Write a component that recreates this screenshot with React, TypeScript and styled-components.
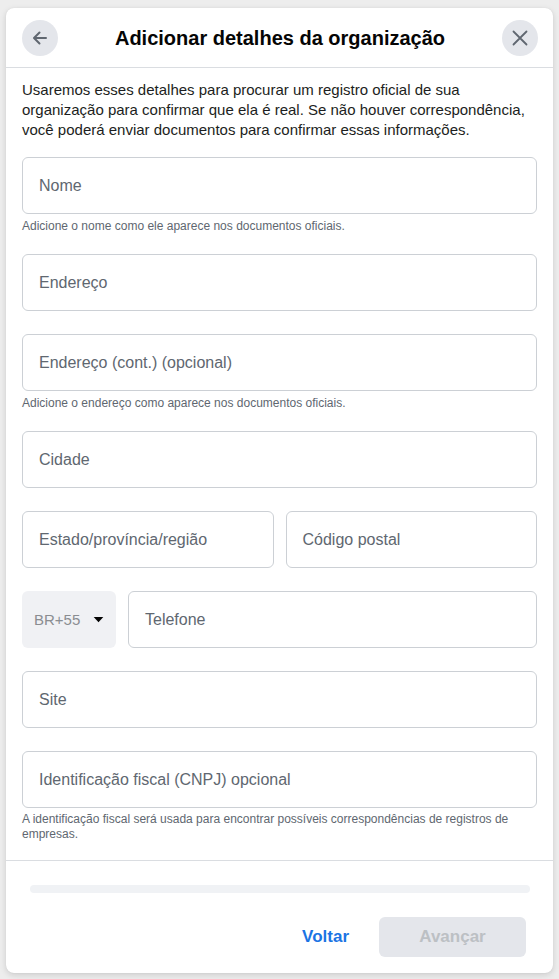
import React from 'react';
import styled, { createGlobalStyle } from 'styled-components';

const GlobalStyle = createGlobalStyle`
  html, body {
    margin: 0;
    padding: 0;
    background: #ededed;
    font-family: 'Liberation Sans', Arial, Helvetica, sans-serif;
    color: #1c1e21;
  }
  * { box-sizing: border-box; }
`;

interface FieldDef {
  label: string;
  helper?: string;
}

const Page = styled.div`
  padding: 8px 6px 6px;
  min-height: 979px;
`;

const Card = styled.div`
  width: 547px;
  height: 965px;
  background: #fff;
  border-radius: 8px;
  box-shadow: 0 2px 6px rgba(0, 0, 0, 0.14), 0 0 1px rgba(0, 0, 0, 0.1);
  display: flex;
  flex-direction: column;
  overflow: hidden;
`;

const Header = styled.div`
  flex-shrink: 0;
  display: grid;
  grid-template-columns: 36px 1fr 36px;
  align-items: center;
  padding: 12px 15px 11px 16px;
  border-bottom: 1px solid #dadde1;
`;

const Title = styled.h1`
  margin: 0;
  text-align: center;
  font-size: 20px;
  font-weight: 700;
  line-height: 24px;
  color: #050505;
`;

const RoundButton = styled.button`
  width: 36px;
  height: 36px;
  border-radius: 50%;
  border: 0;
  padding: 0;
  background: #e4e6eb;
  display: flex;
  align-items: center;
  justify-content: center;
  cursor: pointer;
`;

const Body = styled.div`
  flex: 1 1 0;
  min-height: 0;
  overflow: hidden;
  padding: 12px 16px 0;
`;

const Intro = styled.p`
  margin: 0 0 17px;
  font-size: 15px;
  line-height: 20px;
  color: #1c1e21;
`;

const Group = styled.div`
  margin-bottom: 23px;
`;

const Row = styled.div<{ $cols: string }>`
  display: grid;
  grid-template-columns: ${(p) => p.$cols};
  gap: 12px;
`;

const Input = styled.div`
  height: 57px;
  border: 1px solid #ccd0d5;
  border-radius: 6px;
  display: flex;
  align-items: center;
  padding: 0 16px;
  font-size: 16px;
  color: #606770;
`;

const CountrySelect = styled.div`
  height: 57px;
  border-radius: 6px;
  background: #f0f1f4;
  display: flex;
  align-items: center;
  padding: 0 12px 0 12px;
  justify-content: space-between;
  font-size: 15px;
  color: #8a8d91;
`;

const Helper = styled.div<{ $tight?: boolean }>`
  margin: 4px 0 -3px;
  font-size: 12px;
  line-height: ${(p) => (p.$tight ? '15px' : '16px')};
  color: #606770;
`;

const Footer = styled.div`
  flex-shrink: 0;
  border-top: 1px solid #dadde1;
  padding: 24px 27px 16px 24px;
  display: flex;
  flex-direction: column;
  gap: 24px;
`;

const Progress = styled.div`
  height: 8px;
  border-radius: 4px;
  background: #f0f2f5;
  margin-right: -4px;
`;

const Actions = styled.div`
  display: flex;
  justify-content: flex-end;
  align-items: center;
  gap: 18px;
`;

const TextButton = styled.button`
  border: 0;
  background: none;
  padding: 0 12px;
  height: 40px;
  font-family: inherit;
  font-size: 17px;
  font-weight: 700;
  color: #1b74e4;
  cursor: pointer;
`;

const PrimaryButton = styled.button`
  width: 147px;
  height: 40px;
  border: 0;
  border-radius: 6px;
  background: #e4e6eb;
  font-family: inherit;
  font-size: 17px;
  font-weight: 700;
  color: #bcc0c4;
`;

const ArrowLeft = () => (
  <svg width="20" height="20" viewBox="0 0 20 20" fill="none">
    <path d="M16 10H4.5M9.5 4.5 4 10l5.5 5.5" stroke="#606770" strokeWidth="2" strokeLinecap="round" strokeLinejoin="round" />
  </svg>
);

const Close = () => (
  <svg width="20" height="20" viewBox="0 0 20 20" fill="none">
    <path d="M3.5 3.5l13 13M16.5 3.5l-13 13" stroke="#606770" strokeWidth="1.8" strokeLinecap="round" />
  </svg>
);

const Caret = () => (
  <svg width="11" height="7" viewBox="0 0 12 8">
    <path d="M0.5 1h11L6 7z" fill="#050505" />
  </svg>
);

const Field = ({ label, helper }: FieldDef) => (
  <Group>
    <Input>{label}</Input>
    {helper && <Helper>{helper}</Helper>}
  </Group>
);

export default function App() {
  return (
    <>
      <GlobalStyle />
      <Page>
        <Card>
          <Header>
            <RoundButton aria-label="Voltar">
              <ArrowLeft />
            </RoundButton>
            <Title>Adicionar detalhes da organização</Title>
            <RoundButton aria-label="Fechar">
              <Close />
            </RoundButton>
          </Header>
          <Body>
            <Intro>
              Usaremos esses detalhes para procurar um registro oficial de sua organização para confirmar que
              ela é real. Se não houver correspondência, você poderá enviar documentos para confirmar essas
              informações.
            </Intro>
            <Field label="Nome" helper="Adicione o nome como ele aparece nos documentos oficiais." />
            <Field label="Endereço" />
            <Field label="Endereço (cont.) (opcional)" helper="Adicione o endereço como aparece nos documentos oficiais." />
            <Field label="Cidade" />
            <Group>
              <Row $cols="1fr 1fr">
                <Input>Estado/província/região</Input>
                <Input>Código postal</Input>
              </Row>
            </Group>
            <Group>
              <Row $cols="94px 1fr">
                <CountrySelect>
                  BR+55
                  <Caret />
                </CountrySelect>
                <Input>Telefone</Input>
              </Row>
            </Group>
            <Field label="Site" />
            <Group>
              <Input>Identificação fiscal (CNPJ) opcional</Input>
              <Helper $tight>
                A identificação fiscal será usada para encontrar possíveis correspondências de registros de
                empresas.
              </Helper>
            </Group>
          </Body>
          <Footer>
            <Progress />
            <Actions>
              <TextButton>Voltar</TextButton>
              <PrimaryButton>Avançar</PrimaryButton>
            </Actions>
          </Footer>
        </Card>
      </Page>
    </>
  );
}
